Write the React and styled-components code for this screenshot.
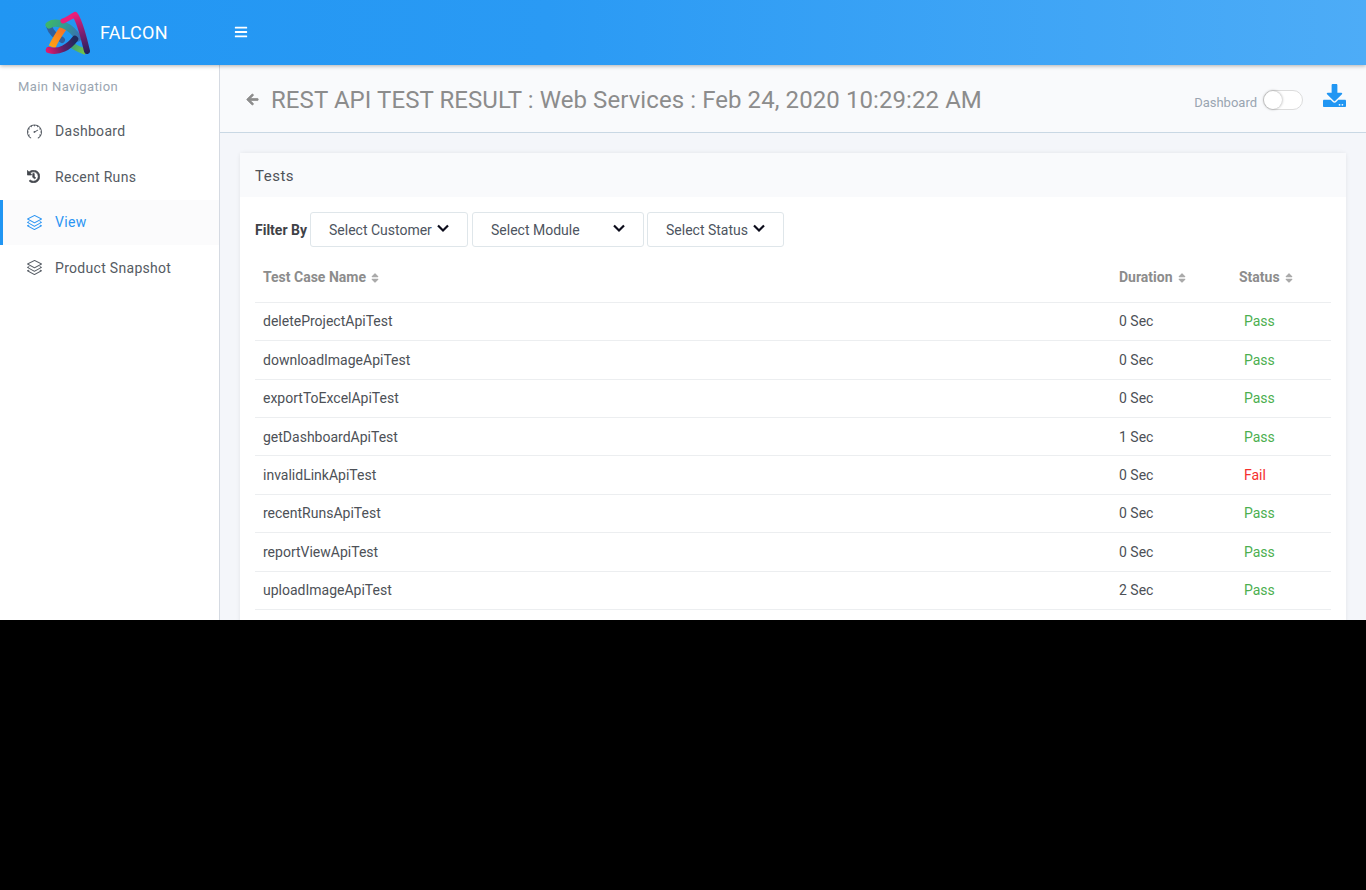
import React from "react"
import styled, { createGlobalStyle } from "styled-components"
import { FaArrowLeft, FaBars, FaDownload, FaHistory, FaSort } from "react-icons/fa"
import { SlLayers, SlSpeedometer } from "react-icons/sl"

const GlobalStyle = createGlobalStyle`
    html, body {
        margin: 0;
        padding: 0;
        background: #000;
    }
    * {
        box-sizing: border-box;
    }
    body {
        font-family: Roboto, "Liberation Sans", sans-serif;
        font-size: 14px;
        color: #4a4a4a;
    }
`

const Page = styled.div`
    width: 1366px;
    height: 620px;
    overflow: hidden;
    display: flex;
    flex-direction: column;
    background: #f4f6fa;
`

const TopBar = styled.header`
    position: relative;
    z-index: 2;
    flex: 0 0 65px;
    display: flex;
    align-items: center;
    background: linear-gradient(90deg, #2196f3 0%, #2a9af4 40%, #4dacf7 100%);
    box-shadow: 0 1px 4px rgba(0, 0, 0, 0.3);
    color: #fff;
`

const Brand = styled.div`
    width: 234px;
    display: flex;
    align-items: center;
    padding-left: 45px;
    font-size: 18px;
`

const BrandName = styled.span`
    margin-left: 9px;
    letter-spacing: 0.25px;
`

const MenuIcon = styled(FaBars)`
    width: 14px;
    height: 14px;
    margin-bottom: 1px;
`

const Main = styled.div`
    flex: 1;
    display: flex;
    min-height: 0;
`

const SideBar = styled.nav`
    flex: 0 0 220px;
    background: #fff;
    border-right: 1px solid #d5dae2;
    padding-top: 13px;
`

const NavTitle = styled.div`
    height: 17px;
    line-height: 17px;
    padding-left: 18px;
    margin-bottom: 13.7px;
    font-size: 13px;
    color: #9aa5b1;
    letter-spacing: 0.4px;
`

const NavItem = styled.div`
    height: 45.5px;
    display: flex;
    align-items: center;
    padding-left: ${(p) => (p.$active ? "24px" : "27px")};
    border-left: ${(p) => (p.$active ? "3px solid #2196f3" : "none")};
    background: ${(p) => (p.$active ? "#fbfbfc" : "transparent")};
    color: ${(p) => (p.$active ? "#2b95f3" : "#555b63")};
    letter-spacing: 0.3px;
    svg {
        width: 15px;
        height: 15px;
        margin-right: 13px;
        flex: none;
    }
`

const HistoryIcon = styled(FaHistory)`
    && {
        width: 13px;
        height: 13px;
        margin-right: 15px;
        stroke: currentColor;
        stroke-width: 25;
        color: #42464c;
    }
`

const Content = styled.main`
    flex: 1;
    min-width: 0;
`

const PageHead = styled.div`
    height: 68px;
    display: flex;
    align-items: center;
    padding: 2px 20px 0 26px;
    background: #f9fafc;
    border-bottom: 1px solid #c9d8e4;
`

const BackIcon = styled(FaArrowLeft)`
    width: 13px;
    height: 13px;
    color: #8c8c8c;
    stroke: currentColor;
    stroke-width: 30;
    margin-right: 12px;
`

const PageTitle = styled.h1`
    flex: 1;
    margin: 0;
    font-size: 24px;
    font-weight: 400;
    letter-spacing: 0.08px;
    color: #8c8c8c;
`

const ToggleLabel = styled.span`
    font-size: 13px;
    color: #9aa5b1;
    margin: 6px 6px 0 0;
`

const Toggle = styled.span`
    position: relative;
    width: 40px;
    height: 20px;
    border-radius: 10px;
    border: 1px solid #dcdcdc;
    background: #fff;
    margin-right: 20px;
    &::after {
        content: "";
        position: absolute;
        left: 0;
        top: 0;
        width: 18px;
        height: 18px;
        border-radius: 50%;
        background: #fff;
        box-shadow: 0 0 3px rgba(0, 0, 0, 0.4);
    }
`

const DownloadIcon = styled(FaDownload)`
    width: 23px;
    height: 23px;
    color: #2196f3;
    margin-bottom: 9px;
`

const Card = styled.section`
    margin: 20px 20px 0;
    background: #fff;
    border-radius: 3px;
    box-shadow: 0 0 4px rgba(0, 0, 0, 0.08);
`

const CardHead = styled.div`
    height: 44px;
    display: flex;
    align-items: center;
    padding: 1px 0 0 15px;
    background: #f9fafc;
    font-size: 15px;
    letter-spacing: 0.5px;
    color: #4f5258;
`

const CardBody = styled.div`
    padding: 15px 15px 20px;
`

const FilterRow = styled.div`
    display: flex;
    align-items: center;
    height: 35px;
    margin-bottom: 5px;
`

const FilterLabel = styled.span`
    font-weight: 700;
    color: #3f4247;
    margin-right: 3px;
`

const SelectBox = styled.div`
    width: ${(p) => p.$w}px;
    height: 35px;
    margin-right: ${(p) => p.$gap}px;
    display: flex;
    align-items: center;
    justify-content: space-between;
    padding: 1px ${(p) => p.$right}px 0 18px;
    border: 1px solid #dfe6ea;
    border-radius: 3px;
    color: #4d5460;
`

const Chevron = styled.svg`
    width: 12px;
    height: 9px;
    margin-bottom: 3px;
    fill: none;
    stroke: #0b0b1a;
    stroke-width: 2.2;
`

const Table = styled.table`
    width: 1076px;
    table-layout: fixed;
    border-collapse: collapse;
`

const Th = styled.th`
    width: ${(p) => p.$w};
    height: 50.3px;
    padding: 1px 8px 0;
    text-align: left;
    font-weight: 700;
    color: #8c8c8c;
    border-bottom: 1px solid #eceef0;
    svg {
        width: 8px;
        height: 12px;
        margin-left: 5px;
        color: #aaa;
        vertical-align: -2px;
    }
`

const Td = styled.td`
    height: 38.4px;
    padding: 0 8px;
    color: #4d5157;
    border-bottom: 1px solid #eceef0;
`

const StatusCell = styled(Td)`
    padding-left: 13px;
    color: ${(p) => (p.$fail ? "#f5302e" : "#4caf50")};
`

function Logo() {
    return (
        <svg width="46" height="44" viewBox="0 0 46 44" fill="none">
            <defs>
                <linearGradient id="lgGreen" gradientUnits="userSpaceOnUse" x1="3" y1="13" x2="33" y2="27">
                    <stop offset="0" stopColor="#3fb56a" />
                    <stop offset="0.5" stopColor="#2f9a96" />
                    <stop offset="1" stopColor="#3a6fb0" />
                </linearGradient>
                <linearGradient id="lgPurple" gradientUnits="userSpaceOnUse" x1="30" y1="4" x2="42" y2="42">
                    <stop offset="0" stopColor="#e91e78" />
                    <stop offset="0.5" stopColor="#7a1f70" />
                    <stop offset="1" stopColor="#23205c" />
                </linearGradient>
                <linearGradient id="lgOrange" gradientUnits="userSpaceOnUse" x1="7" y1="35" x2="19" y2="17">
                    <stop offset="0" stopColor="#ffa012" />
                    <stop offset="1" stopColor="#f4702a" />
                </linearGradient>
                <linearGradient id="lgBottom" gradientUnits="userSpaceOnUse" x1="3" y1="40" x2="30" y2="30">
                    <stop offset="0" stopColor="#e0186c" />
                    <stop offset="0.55" stopColor="#5a1f68" />
                    <stop offset="1" stopColor="#1f2a5c" />
                </linearGradient>
                <linearGradient id="lgLime" gradientUnits="userSpaceOnUse" x1="24" y1="32" x2="42" y2="41">
                    <stop offset="0" stopColor="#2f9a80" />
                    <stop offset="1" stopColor="#7ac943" />
                </linearGradient>
            </defs>
            <path d="M4 15 C6 22 11 25 17 29" stroke="#2f5f9f" strokeWidth="6" strokeLinecap="round" />
            <path d="M7 36 C10 29 14 23 19 16" stroke="url(#lgOrange)" strokeWidth="7" />
            <path d="M4 14 C12 9 26 15 33 27" stroke="url(#lgGreen)" strokeWidth="7" strokeLinecap="round" />
            <path d="M25 33 C30 37 36 39 41 41" stroke="url(#lgLime)" strokeWidth="6" />
            <path d="M4 39 C14 42 24 36 30 28" stroke="url(#lgBottom)" strokeWidth="6.5" strokeLinecap="round" />
            <path d="M18 10 C22 9 26 5 30 4" stroke="#ec1e79" strokeWidth="5" strokeLinecap="round" />
            <path d="M30 4 C35 10 39 28 42 40" stroke="url(#lgPurple)" strokeWidth="6" strokeLinecap="round" />
        </svg>
    )
}

function SelectChevron() {
    return (
        <Chevron viewBox="0 0 12 9">
            <polyline points="1,1.5 6,6.5 11,1.5" />
        </Chevron>
    )
}

const rows = [
    ["deleteProjectApiTest", "0 Sec", "Pass"],
    ["downloadImageApiTest", "0 Sec", "Pass"],
    ["exportToExcelApiTest", "0 Sec", "Pass"],
    ["getDashboardApiTest", "1 Sec", "Pass"],
    ["invalidLinkApiTest", "0 Sec", "Fail"],
    ["recentRunsApiTest", "0 Sec", "Pass"],
    ["reportViewApiTest", "0 Sec", "Pass"],
    ["uploadImageApiTest", "2 Sec", "Pass"],
]

export default function App() {
    return (
        <Page>
            <GlobalStyle />
            <TopBar>
                <Brand>
                    <Logo />
                    <BrandName>FALCON</BrandName>
                </Brand>
                <MenuIcon />
            </TopBar>
            <Main>
                <SideBar>
                    <NavTitle>Main Navigation</NavTitle>
                    <NavItem><SlSpeedometer />Dashboard</NavItem>
                    <NavItem><HistoryIcon />Recent Runs</NavItem>
                    <NavItem $active><SlLayers />View</NavItem>
                    <NavItem><SlLayers />Product Snapshot</NavItem>
                </SideBar>
                <Content>
                    <PageHead>
                        <BackIcon />
                        <PageTitle>REST API TEST RESULT : Web Services : Feb 24, 2020 10:29:22 AM</PageTitle>
                        <ToggleLabel>Dashboard</ToggleLabel>
                        <Toggle />
                        <DownloadIcon />
                    </PageHead>
                    <Card>
                        <CardHead>Tests</CardHead>
                        <CardBody>
                            <FilterRow>
                                <FilterLabel>Filter By</FilterLabel>
                                <SelectBox $w={158} $gap={4} $right={18}>Select Customer <SelectChevron /></SelectBox>
                                <SelectBox $w={172} $gap={3} $right={18}>Select Module <SelectChevron /></SelectBox>
                                <SelectBox $w={137} $gap={0} $right={18}>Select Status <SelectChevron /></SelectBox>
                            </FilterRow>
                            <Table>
                                <thead>
                                    <tr>
                                        <Th $w="856px">Test Case Name<FaSort /></Th>
                                        <Th $w="120px">Duration<FaSort /></Th>
                                        <Th $w="100px">Status<FaSort /></Th>
                                    </tr>
                                </thead>
                                <tbody>
                                    {rows.map(([name, duration, status]) => (
                                        <tr key={name}>
                                            <Td>{name}</Td>
                                            <Td>{duration}</Td>
                                            <StatusCell $fail={status === "Fail"}>{status}</StatusCell>
                                        </tr>
                                    ))}
                                </tbody>
                            </Table>
                        </CardBody>
                    </Card>
                </Content>
            </Main>
        </Page>
    )
}
